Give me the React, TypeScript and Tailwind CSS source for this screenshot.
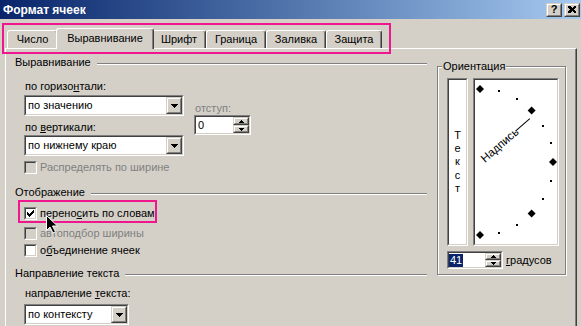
import React from 'react';

function Sunken({ className = '', inner = 'bg-white', children }: { className?: string; inner?: string; children?: React.ReactNode }) {
  return (
    <div className={`border border-t-[#808080] border-l-[#808080] border-r-white border-b-white ${className}`}>
      <div className={`h-full w-full border border-t-[#404040] border-l-[#404040] border-r-[#d4d0c8] border-b-[#d4d0c8] ${inner}`}>
        {children}
      </div>
    </div>
  );
}

function Raised({ className = '', children }: { className?: string; children?: React.ReactNode }) {
  return (
    <div className={`border border-t-[#d4d0c8] border-l-[#d4d0c8] border-r-[#404040] border-b-[#404040] bg-[#d4d0c8] ${className}`}>
      <div className="flex h-full w-full items-center justify-center border border-t-white border-l-white border-r-[#808080] border-b-[#808080]">
        {children}
      </div>
    </div>
  );
}

const DownArrow = () => (
  <svg width="7" height="4" shapeRendering="crispEdges">
    <path d="M0 0h7v1h-1v1h-1v1h-1v1h-1v-1h-1v-1h-1v-1h-1z" fill="black" />
  </svg>
);

const SpinUp = () => (
  <svg width="5" height="3" shapeRendering="crispEdges">
    <path d="M2 0h1v1h1v1h1v1h-5v-1h1v-1h1z" fill="black" />
  </svg>
);

const SpinDown = () => (
  <svg width="5" height="3" shapeRendering="crispEdges">
    <path d="M0 0h5v1h-1v1h-1v1h-1v-1h-1v-1h-1z" fill="black" />
  </svg>
);

function Combo({ value, className = '' }: { value: string; className?: string }) {
  return (
    <Sunken className={`h-[21px] ${className}`}>
      <div className="flex h-full items-center">
        <span className="flex-1 pl-[2px] leading-[13px]">{value}</span>
        <Raised className="h-[17px] w-[16px]">
          <DownArrow />
        </Raised>
      </div>
    </Sunken>
  );
}

function Spin({ className = '', children }: { className?: string; children?: React.ReactNode }) {
  return (
    <Sunken className={className}>
      <div className="flex h-full items-center">
        <div className="flex flex-1 items-center">{children}</div>
        <div className="flex h-full w-[16px] flex-col">
          <Raised className="flex-1">
            <SpinUp />
          </Raised>
          <Raised className="flex-1">
            <SpinDown />
          </Raised>
        </div>
      </div>
    </Sunken>
  );
}

const checkPixels = [
  [6, 0], [5, 1], [6, 1], [0, 2], [4, 2], [5, 2], [6, 2], [0, 3], [1, 3], [3, 3], [4, 3], [5, 3],
  [0, 4], [1, 4], [2, 4], [3, 4], [4, 4], [1, 5], [2, 5], [3, 5], [2, 6],
];

function Check({ checked = false, disabled = false, children }: { checked?: boolean; disabled?: boolean; children?: React.ReactNode }) {
  return (
    <div className="flex h-[13px] items-center">
      <Sunken className="h-[13px] w-[13px] shrink-0" inner={disabled ? 'bg-[#d4d0c8]' : 'bg-white'}>
        {checked && (
          <svg width="9" height="9" shapeRendering="crispEdges" className="block">
            {checkPixels.map(([x, y]) => (
              <rect key={`${x}-${y}`} x={x + 1} y={y + 1} width="1" height="1" fill="black" />
            ))}
          </svg>
        )}
      </Sunken>
      <span className={`ml-[3px] whitespace-nowrap leading-[13px] ${disabled ? 'text-[#808080]' : ''}`}>{children}</span>
    </div>
  );
}

function Header({ children }: { children: React.ReactNode }) {
  return (
    <div className="flex h-[14px] items-center">
      <span className="leading-[14px]">{children}</span>
      <div className="ml-[6px] mt-[4px] h-[2px] flex-1 border-t border-b border-t-[#808080] border-b-white" />
    </div>
  );
}

function Dial() {
  const cx = 5;
  const cy = 82;
  const r = 73;
  const marks: React.ReactNode[] = [];
  for (let a = -90; a <= 90; a += 15) {
    const rad = (a * Math.PI) / 180;
    const x = cx + r * Math.cos(rad);
    const y = cy - r * Math.sin(rad);
    marks.push(
      a % 45 === 0 ? (
        <polygon key={a} points={`${x},${y - 4} ${x + 4},${y} ${x},${y + 4} ${x - 4},${y}`} />
      ) : (
        <rect key={a} x={Math.round(x) - 1} y={Math.round(y) - 1} width="2" height="2" />
      )
    );
  }
  return (
    <svg width="82" height="164" className="block">
      <g fill="black">{marks}</g>
      <g transform={`translate(${cx} ${cy}) rotate(-41)`}>
        <text x="3" y="4" fontSize="11.5" fill="black" fontFamily="Liberation Sans, Arial, sans-serif">
          Надпись
        </text>
        <line x1="47" y1="0" x2="66" y2="0" stroke="black" strokeWidth="1" />
      </g>
    </svg>
  );
}

const tabs = [
  { label: 'Число', w: 'w-[51px]', active: false },
  { label: 'Выравнивание', w: 'w-[98px]', active: true },
  { label: 'Шрифт', w: 'w-[54px]', active: false },
  { label: 'Граница', w: 'w-[60px]', active: false },
  { label: 'Заливка', w: 'w-[60px]', active: false },
  { label: 'Защита', w: 'w-[56px]', active: false },
];

export default function App() {
  return (
    <div className="flex h-[326px] w-[581px] flex-col overflow-hidden bg-[#d4d0c8] font-['Liberation_Sans',Arial,sans-serif] text-[11px] text-black">
      {/* Title bar */}
      <div className="flex h-[19px] shrink-0 items-center justify-between bg-linear-to-r from-[#0a246a] to-[#a6caf0] pl-[3px] pr-[1px]">
        <span className="text-[12px] font-bold text-white">Формат ячеек</span>
        <div className="flex gap-[2px]">
          <Raised className="h-[14px] w-[16px]">
            <span className="text-[11px] font-bold leading-none">?</span>
          </Raised>
          <Raised className="h-[14px] w-[16px]">
            <svg width="8" height="7" shapeRendering="crispEdges">
              <path d="M0 0h2l2 2l2-2h2v1l-2 2.5l2 2.5v1h-2l-2-2l-2 2h-2v-1l2-2.5l-2-2.5z" fill="black" />
            </svg>
          </Raised>
        </div>
      </div>

      {/* Tabs */}
      <div className="relative mt-[9px] flex h-[20px] shrink-0 items-end pl-[7px]">
        {tabs.map((t) =>
          t.active ? (
            <div
              key={t.label}
              className={`relative z-10 -mx-[2px] -mb-[1px] flex h-[21px] items-center justify-center rounded-t-[3px] border-t border-l border-r border-t-white border-l-white border-r-[#404040] bg-[#d4d0c8] pb-[2px] shadow-[inset_-1px_0_0_#808080] ${t.w}`}
            >
              {t.label}
            </div>
          ) : (
            <div
              key={t.label}
              className={`flex h-[18px] items-center justify-center rounded-t-[3px] border-t border-l border-r border-t-white border-l-white border-r-[#404040] shadow-[inset_-1px_0_0_#808080] ${t.w}`}
            >
              {t.label}
            </div>
          )
        )}
        <span className="pointer-events-none absolute left-[2px] -top-[5px] z-20 h-[31px] w-[389px] border-2 border-[#f0168e]" />
      </div>

      {/* Panel */}
      <div className="ml-[5px] mr-[4px] flex flex-1 border-t border-l border-r border-t-white border-l-white border-r-[#404040] pl-[9px] shadow-[inset_-1px_0_0_#808080]">
        <div className="w-[412px] shrink-0">
          <div className="mt-[6px]">
            <Header>Выравнивание</Header>
          </div>
          <div className="mt-[10px] flex pl-[9px]">
            <div className="w-[160px]">
              <div className="h-[14px] pl-[1px] leading-[14px]">
                по горизо<u>н</u>тали:
              </div>
              <Combo value="по значению" className="mt-[2px] w-[160px]" />
              <div className="mt-[4px] h-[14px] pl-[1px] leading-[14px]">
                по <u>в</u>ертикали:
              </div>
              <Combo value="по нижнему краю" className="mt-[1px] w-[160px]" />
            </div>
            <div className="ml-[10px]">
              <div className="mt-[22px] h-[14px] pl-[1px] leading-[14px] text-[#808080]">отступ:</div>
              <Spin className="h-[20px] w-[57px]">
                <span className="pl-[2px]">0</span>
              </Spin>
            </div>
          </div>
          <div className="mt-[5px] pl-[9px]">
            <Check disabled>Распределять по ширине</Check>
          </div>

          <div className="mt-[11px]">
            <Header>Отображение</Header>
          </div>
          <div className="relative mt-[8px] pl-[9px]">
            <Check checked>
              перено<u>с</u>ить по словам
            </Check>
            <span className="pointer-events-none absolute left-[3px] -top-[7px] z-20 h-[23px] w-[139px] border-2 border-[#f0168e]" />
            <svg width="12" height="19" className="pointer-events-none absolute left-[31px] top-[8px] z-30">
              <path d="M0.5 0.5v15l3.5-3.5l3 6l2.5-1.2l-3-5.8h5z" fill="black" stroke="white" strokeWidth="1" />
            </svg>
          </div>
          <div className="mt-[7px] pl-[9px]">
            <Check disabled>автоподбор ширины</Check>
          </div>
          <div className="mt-[4px] pl-[9px]">
            <Check>
              о<u>б</u>ъединение ячеек
            </Check>
          </div>

          <div className="mt-[9px]">
            <Header>Направление текста</Header>
          </div>
          <div className="mt-[6px] h-[14px] pl-[10px] leading-[14px]">
            направление <u>т</u>екста:
          </div>
          <div className="mt-[4px] pl-[9px]">
            <Combo value="по контексту" className="w-[105px]" />
          </div>
        </div>

        {/* Orientation */}
        <div className="relative ml-[10px] mt-[17px] h-[209px] w-[129px] self-start border border-[#808080] pt-[11px] pl-[9px] shadow-[inset_1px_1px_0_#fff,1px_1px_0_#fff]">
          <span className="absolute left-[4px] -top-[8px] bg-[#d4d0c8] px-[1px] leading-[14px]">Ориентация</span>
          <div className="flex gap-[5px]">
            <Sunken className="h-[168px] w-[21px]">
              <div className="flex h-full flex-col items-center justify-center">
                {['Т', 'е', 'к', 'с', 'т'].map((c, i) => (
                  <span key={i} className="leading-[13.3px]">
                    {c}
                  </span>
                ))}
              </div>
            </Sunken>
            <Sunken className="h-[168px] w-[86px]">
              <Dial />
            </Sunken>
          </div>
          <div className="mt-[5px] flex items-center">
            <Spin className="h-[18px] w-[56px]">
              <span className="bg-[#0a246a] px-[1px] leading-[13px] text-white">41</span>
            </Spin>
            <span className="ml-[3px]">
              <u>г</u>радусов
            </span>
          </div>
        </div>
      </div>
    </div>
  );
}
